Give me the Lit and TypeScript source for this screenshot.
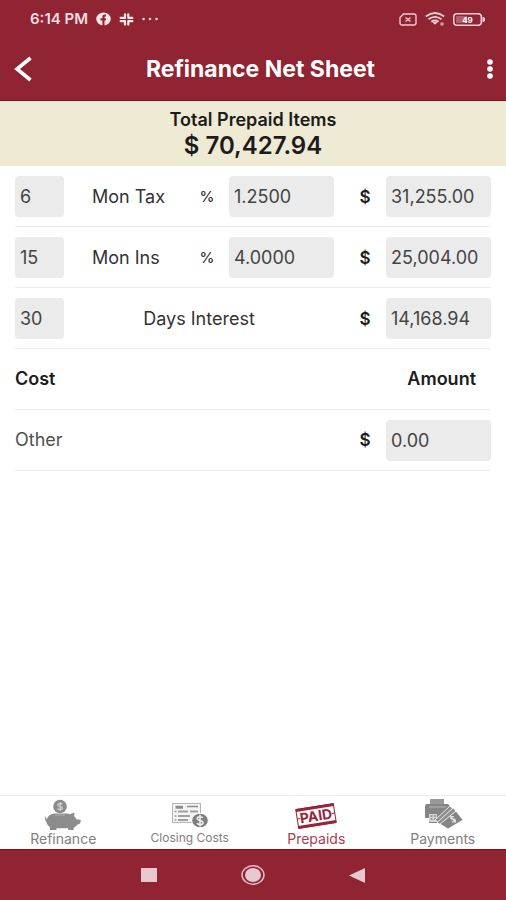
import { LitElement, html, css, svg, nothing } from "lit";
import { customElement, property, state } from "lit/decorators.js";
import { classMap } from "lit/directives/class-map.js";

const piggy = svg`
  <svg class="icon" viewBox="0 0 40 32" aria-hidden="true">
    <circle cx="17" cy="7.500" r="6.800" fill="#8c8c8c"/>
    <path d="M19.600 5.100c-.8-1-4.800-1.200-4.800.8 0 2.200 4.800 1 4.800 3.200 0 1.900-4 1.900-5 .5M17.200 3v9" fill="none" stroke="#d0d0d0" stroke-width="1.200"/>
    <path d="M4 21c0-4 4-6.500 9-6.500h10c1.500 0 2.800.3 4 .7l4.500-1.700-.4 3.800c1 .8 1.700 1.800 2.200 2.900l4.700.8-1 3.500-3 1.500c-.8 1.200-2 2.100-3.300 2.700v2.300h-5.500v-1.700H13.500V31H7v-3c-2-1.200-3.300-3-3.700-5.200C2 22 1.500 19 2.800 17c.2 1.500.5 2.300 1.200 4z" fill="#8c8c8c"/>
    <path d="M12 16h10" stroke="#b0b0b0" stroke-width="1"/>
  </svg>`;

const closing = svg`
  <svg class="icon" viewBox="0 0 40 32" aria-hidden="true">
    <rect x="2.500" y="4.500" width="28" height="19" fill="#f4f4f4" stroke="#b4b4b4"/>
    <path d="M5.500 7.500h7.500M5.500 9h7.500M17 7.500h11" stroke="#8c8c8c" stroke-width="1.500"/>
    <path d="M4.500 12.500h2M4.500 17h2M4.500 21h2" stroke="#999" stroke-width="1.600"/>
    <path d="M8 12.500h10M20 12.500h8M8 17h12M8 21h10" stroke="#a0a0a0" stroke-width="1.800"/>
    <ellipse cx="30" cy="21.500" rx="8.300" ry="7.300" fill="#808080" stroke="#fff"/>
    <path d="M32.800 18.900c-1.200-1.900-5.600-1.500-5.600.6 0 2.500 5.800 1.500 5.800 4.200 0 2.400-4.700 2.500-6 .4M30 15.800v11.800" fill="none" stroke="#f1f1f1" stroke-width="1.500"/>
  </svg>`;

const paid = svg`
  <svg class="icon" viewBox="0 0 42 32" aria-hidden="true">
    <g transform="rotate(-9 21 17)" fill="none" stroke="#9b2338">
      <rect x="2" y="7.500" width="38" height="19" stroke-width="1"/>
      <path d="M2 8.500h38M2 25.500h38" stroke-width="3"/>
      <path d="M2 17h3M37 17h3" stroke-width="1.200"/>
      <text class="stamp" x="21" y="22" text-anchor="middle" fill="#9b2338" stroke="none">PAID</text>
    </g>
  </svg>`;

const payments = svg`
  <svg class="icon" viewBox="0 0 42 32" aria-hidden="true">
    <path d="M8 0h14v6H8z" fill="#999"/>
    <path d="M4 5h22l3 3v6L17 24H7v-5H3V7z" fill="#858585"/>
    <path d="M7 8h17" stroke="#b8b8b8" stroke-width="1"/>
    <path d="M7 15h8v8H7z" fill="#d4d4d4"/>
    <path d="M8.500 17h2M12 17h2M8.500 20h2M12 20h2" stroke="#8a8a8a" stroke-width="1.500"/>
    <path d="M13 21 28 7l3 3-14 14z" fill="#8f8f8f" stroke="#fff" stroke-width=".8"/>
    <path d="M15 23.500 31 9l3 3-15 14z" fill="#8f8f8f" stroke="#fff" stroke-width=".8"/>
    <path d="M18 25 34 12l7 9-15 9z" fill="#858585" stroke="#fff" stroke-width=".8"/>
    <path d="M32 18c-1.600-1.200-4 .2-3 1.600 1 1.300 3.200-.3 4.200 1.200.9 1.500-1.700 2.900-3.300 1.700M28.300 17l5.400 6.500" fill="none" stroke="#e6e6e6" stroke-width="1.200"/>
  </svg>`;

const TABS = [
  { name: "Refinance", icon: piggy, small: false },
  { name: "Closing Costs", icon: closing, small: true },
  { name: "Prepaids", icon: paid, small: false },
  { name: "Payments", icon: payments, small: false },
];

const base = css`
  * { box-sizing: border-box; }
  button { border: 0; margin: 0; padding: 0; background: none; color: inherit; font: inherit; cursor: pointer; }
  svg { display: block; }
`;

@customElement("status-bar")
export class StatusBar extends LitElement {
  static styles = [base, css`
    :host { display: flex; align-items: center; gap: 8px; height: 38px; padding: 0 21px 0 30px; color: #f3dfe2; }
    .time { font-size: 15px; font-weight: 600; line-height: 20px; }
    .space { flex: 1; }
    .level { font-size: 8px; font-weight: 700; }
  `];
  render() {
    return html`
      <span class="time">6:14 PM</span>
      <svg width="15" height="14" viewBox="0 0 15 14" aria-hidden="true">
        <ellipse cx="7.500" cy="7" rx="7.300" ry="6.500" fill="#f6e6e8"/>
        <path d="M6.400 14V8.500H4.500V6.300h1.900V5c0-1.900 1.200-2.700 3.600-2.300v1.700c-1.200-.1-1.500.1-1.500.9v1h1.600l-.3 2.200H8.500V14z" fill="#912433"/>
      </svg>
      <svg width="15" height="13" viewBox="0 0 15 13" aria-hidden="true">
        <g stroke="#f6e6e8" stroke-width="2.300" stroke-linecap="round">
          <path d="M6 1.500v3.500M9.300 4.800h0V1.500M9.300 4.900h4M1.700 4.900H5.500M6 8.200v3.300M1.700 8.200H5.500M9.300 8.200v3.300M9.500 8.200h3.800"/>
        </g>
        <path d="M7.600 3v7M4 6.500h7" stroke="#912433" stroke-width=".9"/>
      </svg>
      <svg width="17" height="4" viewBox="0 0 17 4" aria-hidden="true">
        <g fill="#f0d5d9"><circle cx="1.500" cy="2" r="1.300"/><circle cx="8" cy="2" r="1.300"/><circle cx="14.500" cy="2" r="1.300"/></g>
      </svg>
      <span class="space"></span>
      <svg width="18" height="13" viewBox="0 0 18 13" aria-hidden="true">
        <g fill="none" stroke="#eec8cd" stroke-width="1.400">
          <path d="M4.500 1H15q2 0 2 2v7q0 2-2 2H3q-2 0-2-2V4.500z"/>
          <path d="m6.500 4.500 5 4m0-4-5 4"/>
        </g>
      </svg>
      <svg width="20" height="14" viewBox="0 0 20 14" aria-hidden="true">
        <g fill="none" stroke="#f0d0d4" stroke-width="1.800">
          <path d="M.8 4.500Q10-2.500 19.200 4.500M3.500 7.200q6.500-4.800 13 0M6.300 9.800q3.700-2.600 7.400 0"/>
        </g>
        <path d="m7.500 10.500 2.500 2.300 2.500-2.300q-2.500-1.600-5 0z" fill="#f0d0d4"/>
        <circle cx="17" cy="12" r="1.800" fill="#d59aa4"/>
      </svg>
      <svg width="32" height="13" viewBox="0 0 32 13" role="img" aria-label="Battery">
        <rect x=".8" y=".8" width="27.500" height="11.400" rx="3" fill="none" stroke="#f0d0d4" stroke-width="1.500"/>
        <path d="M29.500 3.500 32 5v3l-2.500 1.500z" fill="#f0d0d4"/>
        <path d="M3 3h11v7H3z" fill="#b05f6c"/>
        <text class="level" x="14.500" y="9.500" text-anchor="middle" fill="#fff">49</text>
      </svg>`;
  }
}

@customElement("net-field")
export class NetField extends LitElement {
  @property() value = "";
  @property() label = "";
  static styles = [base, css`
    :host { display: block; min-width: 0; }
    .box { display: block; width: 100%; height: 41px; border: 0; border-radius: 4px; padding: 0 5px; background: #ebebeb; color: #444; font: inherit; font-size: 18px; outline-color: #912433; }
  `];
  render() {
    return html`<input class="box" inputmode="decimal" aria-label=${this.label} .value=${this.value} />`;
  }
}

@customElement("prepaid-row")
export class PrepaidRow extends LitElement {
  @property() count = "";
  @property() label = "";
  @property() rate = "";
  @property() amount = "";
  static styles = [base, css`
    :host { display: grid; grid-template-columns: 49px minmax(0, 1fr) 44px 105px 52px 105px; align-items: center; padding: 10px 0 9px; border-bottom: 1px solid #ededed; color: #333; }
    .label { padding-left: 28px; white-space: nowrap; }
    .wide { grid-column: 2 / 5; padding: 0; text-align: center; }
    .percent { text-align: center; font-size: 15px; font-weight: 500; }
    .dollar { padding-left: 10px; text-align: center; font-size: 17px; font-weight: 600; color: #1c1c1c; }
  `];
  render() {
    return html`
      <net-field .value=${this.count} .label=${`${this.label} count`}></net-field>
      <span class=${classMap({ label: true, wide: !this.rate })}>${this.label}</span>
      ${this.rate
        ? html`<span class="percent">%</span>
            <net-field .value=${this.rate} .label=${`${this.label} percent`}></net-field>`
        : nothing}
      <span class="dollar">$</span>
      <net-field .value=${this.amount} .label=${`${this.label} amount`}></net-field>`;
  }
}

@customElement("app-root")
export class AppRoot extends LitElement {
  @state() private active = "Prepaids";

  static styles = [base, css`
    :host { display: flex; flex-direction: column; min-height: 100vh; background: #fff; color: #1c1c1c; font-family: Inter, Roboto, sans-serif; font-size: 18px; line-height: 20px; }
    .top { background: #912433; color: #fff; border-bottom: 1px solid #7d1220; }
    .bar { display: grid; grid-template-columns: 48px 1fr 48px; align-items: center; height: 62px; }
    .title { margin: 0; padding-left: 15px; text-align: center; font-size: 23px; line-height: 28px; font-weight: 700; white-space: nowrap; }
    .back { display: flex; justify-content: flex-start; padding: 12px 14px; }
    .more { display: flex; justify-content: flex-end; padding: 12px; }
    .total { display: flex; flex-direction: column; align-items: center; padding: 8px 0 6px; background: #efead4; }
    .caption { margin: 0; font-size: 18px; line-height: 22px; font-weight: 600; }
    .sum { font-size: 24px; line-height: 29px; font-weight: 600; }
    .content { flex: 1; padding: 0 15px; }
    .costs { width: 100%; border-collapse: separate; border-spacing: 0; table-layout: fixed; }
    .costs th, .costs td { height: 61px; padding: 0; border-bottom: 1px solid #ededed; text-align: left; }
    .costs th { font-weight: 600; }
    .costs .item { color: #505050; font-weight: 400; }
    .costs .amount { width: 157px; }
    .costs th.amount { padding-right: 15px; text-align: right; }
    .money { display: grid; grid-template-columns: 52px 105px; align-items: center; }
    .dollar { padding-left: 10px; text-align: center; font-size: 17px; font-weight: 600; }
    .tabs { display: grid; grid-template-columns: repeat(4, 1fr); height: 54px; border-top: 1px solid #ececec; }
    .tab { display: flex; flex-direction: column; align-items: center; padding-top: 3px; color: #808080; font-size: 14px; line-height: 16px; font-weight: 400; white-space: nowrap; }
    .small { font-size: 12px; line-height: 14px; }
    .active { color: #a8404f; }
    .icon { height: 32px; }
    .stamp { font-size: 14px; font-weight: 700; }
    .system { display: grid; grid-template-columns: repeat(3, 104px); justify-content: center; height: 51px; background: #912433; border-top: 1px solid #7d0f1d; }
    .key { display: flex; align-items: center; justify-content: center; }
  `];

  render() {
    return html`
      <header class="top">
        <status-bar></status-bar>
        <div class="bar">
          <button class="back" aria-label="Back">
            <svg width="19" height="26" viewBox="0 0 19 26"><path d="M16.500 2 3 13l13.500 11" fill="none" stroke="#fff" stroke-width="3.600"/></svg>
          </button>
          <h1 class="title">Refinance Net Sheet</h1>
          <button class="more" aria-label="More options">
            <svg width="8" height="20" viewBox="0 0 8 20"><g fill="#fff"><circle cx="4" cy="3" r="2.800"/><circle cx="4" cy="10" r="2.800"/><circle cx="4" cy="17" r="2.800"/></g></svg>
          </button>
        </div>
      </header>
      <section class="total">
        <h2 class="caption">Total Prepaid Items</h2>
        <strong class="sum">$ 70,427.94</strong>
      </section>
      <main class="content">
        <prepaid-row count="6" label="Mon Tax" rate="1.2500" amount="31,255.00"></prepaid-row>
        <prepaid-row count="15" label="Mon Ins" rate="4.0000" amount="25,004.00"></prepaid-row>
        <prepaid-row count="30" label="Days Interest" amount="14,168.94"></prepaid-row>
        <table class="costs">
          <thead>
            <tr><th scope="col">Cost</th><th class="amount" scope="col">Amount</th></tr>
          </thead>
          <tbody>
            <tr>
              <th class="item" scope="row">Other</th>
              <td class="amount"><div class="money"><span class="dollar">$</span><net-field value="0.00" label="Other amount"></net-field></div></td>
            </tr>
          </tbody>
        </table>
      </main>
      <nav class="tabs">
        ${TABS.map((t) => html`
          <button class=${classMap({ tab: true, small: t.small, active: t.name === this.active })}
            aria-current=${t.name === this.active ? "page" : "false"}
            @click=${() => (this.active = t.name)}>${t.icon}<span>${t.name}</span></button>`)}
      </nav>
      <footer class="system">
        <button class="key" aria-label="Recent apps"><svg width="16" height="14" viewBox="0 0 16 14"><path d="M0 0h16v14H0z" fill="#e8c8ce"/></svg></button>
        <button class="key" aria-label="Home">
          <svg width="24" height="20" viewBox="0 0 24 20"><ellipse cx="12" cy="10" rx="11" ry="9.200" fill="none" stroke="#e4bcc3" stroke-width="1.500"/><ellipse cx="12" cy="10" rx="8" ry="7" fill="#e8c8ce"/></svg>
        </button>
        <button class="key" aria-label="Go back"><svg width="16" height="15" viewBox="0 0 16 15"><path d="M16 0v15L0 7.500z" fill="#e8c8ce"/></svg></button>
      </footer>`;
  }
}
